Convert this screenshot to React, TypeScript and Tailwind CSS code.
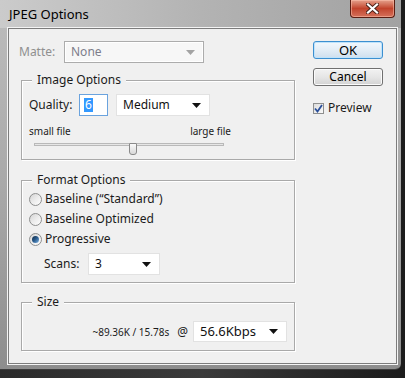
import { ReactNode } from 'react';

const FONT = "font-['Noto_Sans','Liberation_Sans',sans-serif]";

// small black drop-down triangle
function Arrow({ color = '#111' }: { color?: string }) {
  return (
    <svg width="9" height="5" viewBox="0 0 9 5" className="shrink-0">
      <path d="M0 0 H9 L4.5 5 Z" fill={color} />
    </svg>
  );
}

function Dropdown({
  value,
  className,
  textClass = 'text-[12px] text-[#111]',
}: {
  value: string;
  className: string;
  textClass?: string;
}) {
  return (
    <div
      className={`flex items-center justify-between bg-white border border-[#e2e2e2] pl-[6px] pr-[8px] ${className}`}
    >
      <span className={`leading-none ${textClass}`}>{value}</span>
      <Arrow />
    </div>
  );
}

function Group({
  title,
  className,
  children,
}: {
  title: string;
  className: string;
  children: ReactNode;
}) {
  return (
    <div
      className={`relative ml-[2px] w-[274px] border border-[#a9a9a9] shadow-[inset_1px_1px_0_#ffffff,1px_1px_0_#ffffff] ${className}`}
    >
      <span className="absolute left-[10px] top-[-8px] bg-[#f0f0f0] px-[5px] text-[12px] leading-[14px] text-[#1b1b1b]">
        {title}
      </span>
      {children}
    </div>
  );
}

function Radio({ label, checked }: { label: string; checked?: boolean }) {
  return (
    <div className="flex h-[20px] items-center pl-[7px]">
      <span className="flex h-[13px] w-[13px] items-center justify-center rounded-full border border-[#8e8f8f] bg-gradient-to-br from-[#d4d4d4] via-[#ececec] to-[#ffffff]">
        {checked && (
          <span className="h-[7px] w-[7px] rounded-full bg-gradient-to-br from-[#0f2a45] via-[#2b5d8f] to-[#7fb6e6]" />
        )}
      </span>
      <span className="ml-[3px] text-[12px] leading-none text-[#1b1b1b]">{label}</span>
    </div>
  );
}

export default function App() {
  return (
    <div className={`relative h-[378px] w-[405px] overflow-hidden bg-gradient-to-r from-[#2b2b2b] via-[#3a3a3a] to-[#1c1c1c] ${FONT}`}>
      {/* window */}
      <div className="flex h-[370px] w-[401px] flex-col rounded-br-[6px] border-b border-[#3c3c3c] bg-gradient-to-b from-[#bdbdbd] via-[#a9a9a9] to-[#8d8d8d]">
        {/* title bar */}
        <div className="flex h-[28px] items-start bg-gradient-to-r from-[#cbcbcb] via-[#b3b3b3] to-[#a2a2a2]">
          <span className="ml-[9px] mt-[6px] text-[13px] leading-[16px] text-black">JPEG Options</span>
          <div className="ml-auto mr-[6px] flex h-[18px] w-[45px] items-center justify-center rounded-b-[4px] border border-t-0 border-[#5a1d12] bg-gradient-to-b from-[#e4a08c] via-[#c1432c] to-[#d5705a] shadow-[inset_0_0_0_1px_rgba(255,200,180,0.5)]">
            <svg width="13" height="11" viewBox="0 0 13 11">
              <path d="M2 1.5 L11 9.5 M11 1.5 L2 9.5" stroke="#4a2018" strokeWidth="4" strokeLinecap="square" />
              <path d="M2 1.5 L11 9.5 M11 1.5 L2 9.5" stroke="#ffffff" strokeWidth="2.2" strokeLinecap="square" />
            </svg>
          </div>
        </div>

        {/* content */}
        <div className="ml-[8px] flex h-[336px] w-[389px] border border-[#7c7c7c] bg-[#f0f0f0] pl-[10px] pt-[12px] shadow-[0_0_0_1px_#f4f4f4]">
          {/* left column */}
          <div className="flex w-[276px] flex-col">
            <div className="flex h-[22px] items-center">
              <span className="w-[45px] text-[12px] leading-none text-[#8f8f8f]">Matte:</span>
              <div className="flex h-[22px] w-[140px] items-center justify-between border border-[#acacac] bg-[#f7f7f7] pl-[6px] pr-[8px] shadow-[inset_0_0_0_1px_#ffffff]">
                <span className="text-[12px] leading-none text-[#7d7d8a]">None</span>
                <Arrow color="#a3a3a3" />
              </div>
            </div>

            <Group title="Image Options" className="mt-[17px] h-[80px]">
              <div className="mt-[13px] flex items-center pl-[7px]">
                <span className="w-[50px] text-[12px] leading-none text-[#1b1b1b]">Quality:</span>
                <div className="flex h-[22px] w-[29px] items-center border border-[#6aa3de] bg-white pl-[4px]">
                  <span className="bg-[#3399ff] px-[1px] text-[12px] leading-[14px] text-white">6</span>
                </div>
                <Dropdown value="Medium" className="ml-[8px] h-[22px] w-[94px]" />
              </div>
              <div className="mt-[8px] flex w-[209px] justify-between pl-[7px] text-[10px] leading-[14px] text-[#1b1b1b]">
                <span>small file</span>
                <span>large file</span>
              </div>
              <div className="relative ml-[12px] mt-[2px] h-[12px] w-[190px]">
                <div className="mt-[5px] h-[3px] w-[190px] border border-[#b9b9b9] bg-[#e6e6e6]" />
                <div className="absolute left-[95px] top-0 h-[12px] w-[8px] rounded-b-[3px] rounded-t-[1px] border border-[#8a8a8a] bg-gradient-to-b from-[#fafafa] to-[#d9d9d9]" />
              </div>
            </Group>

            <Group title="Format Options" className="mt-[20px] h-[103px]">
              <div className="mt-[8px] flex flex-col">
                <Radio label={'Baseline (\u201CStandard\u201D)'} />
                <Radio label="Baseline Optimized" />
                <Radio label="Progressive" checked />
              </div>
              <div className="mt-[4px] flex items-center pl-[22px]">
                <span className="w-[44px] text-[12px] leading-none text-[#1b1b1b]">Scans:</span>
                <Dropdown value="3" className="h-[22px] w-[72px]" />
              </div>
            </Group>

            <Group title="Size" className="mt-[19px] h-[49px]">
              <div className="mt-[18px] flex items-center justify-end pr-[7px]">
                <span className="text-[10px] leading-none text-[#1b1b1b]">~89.36K / 15.78s</span>
                <span className="ml-[8px] text-[12px] leading-none text-[#1b1b1b]">@</span>
                <Dropdown
                  value="56.6Kbps"
                  className="ml-[5px] h-[21px] w-[94px]"
                  textClass="text-[13px] text-[#111]"
                />
              </div>
            </Group>
          </div>

          {/* right column */}
          <div className="ml-[18px] flex w-[70px] flex-col">
            <button className="flex h-[18px] w-[70px] items-center justify-center rounded-[3px] border border-[#3c8fd0] bg-gradient-to-b from-[#f2f8fd] via-[#e3edf6] to-[#cfdfee] shadow-[inset_0_0_0_1px_#bfe3fb] text-[13px] leading-none text-black">
              OK
            </button>
            <button className="mt-[9px] flex h-[18px] w-[70px] items-center justify-center rounded-[3px] border border-[#707070] bg-gradient-to-b from-[#f2f2f2] via-[#e6e6e6] to-[#d2d2d2] shadow-[inset_0_0_0_1px_#fbfbfb] text-[12px] leading-none text-black">
              Cancel
            </button>
            <div className="mt-[16px] flex items-center">
              <span className="flex h-[11px] w-[11px] items-center justify-center border border-[#8e8f8f] bg-gradient-to-br from-[#dcdcdc] to-[#fafafa]">
                <svg width="9" height="9" viewBox="0 0 9 9">
                  <path d="M1 4.5 L3.5 7.5 L8 1" fill="none" stroke="#2a4f9a" strokeWidth="1.8" />
                </svg>
              </span>
              <span className="ml-[4px] text-[12px] leading-none text-[#1b1b1b]">Preview</span>
            </div>
          </div>
        </div>
      </div>
    </div>
  );
}
